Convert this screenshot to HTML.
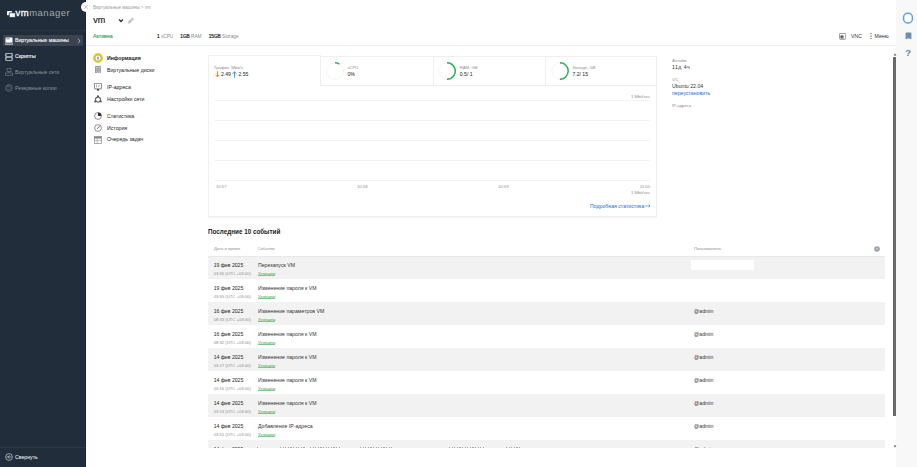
<!DOCTYPE html>
<html><head><meta charset="utf-8">
<style>
*{box-sizing:border-box;margin:0;padding:0}
html,body{width:917px;height:467px;overflow:hidden;background:#fff;font-family:"Liberation Sans",sans-serif;color:#222}
.a{position:absolute;white-space:nowrap}
#side{position:absolute;left:0;top:0;width:86px;height:467px;background:#212d3a;border-right:1px solid #1a2530}
#strip{position:absolute;left:896px;top:0;width:21px;height:467px;background:#f8f8f8}
.nav{font-size:5.2px;line-height:6px}
.g{color:#9a9a9a}
.dl{position:absolute;left:215px;width:435px;height:1px;background:repeating-linear-gradient(to right,#eeeeee 0 1px,#f8f8f8 1px 2px)}
.hs{font-size:4.8px;line-height:6px;color:#8a8a8a;letter-spacing:-0.05px}
.hs b{font-weight:normal;color:#2a2a2a;-webkit-text-stroke:0.2px #2a2a2a}
.vb{-webkit-text-stroke:0.15px #2a2a2a}
.row{position:absolute;left:208px;width:677px;height:23px}
.row.gr{background:#f2f2f2}
.d{font-size:5.1px;line-height:6px;color:#2a2a2a;-webkit-text-stroke:0.03px #2a2a2a}
.t{font-size:4.2px;line-height:4px;color:#8e8e8e}
.row .t,.row .ok{margin-top:0.5px}
.ok{font-size:4.25px;line-height:4px;color:#3a9a4a}
.ok::after{content:"";position:absolute;left:0;right:0;bottom:0px;height:0.5px;background:#7cc58b}
.ev{font-size:5.2px;line-height:6px;color:#333}
.usr{font-size:5.2px;line-height:6px;color:#333}
</style></head><body>

<div id="side">
  <!-- logo -->
  <svg class="a" style="left:6px;top:9.6px" width="11" height="8" viewBox="0 0 11 8"><rect x="1" y="1" width="5" height="4.2" rx="0.5" fill="#fff"/><rect x="3.3" y="2.8" width="6" height="4.6" rx="0.5" fill="#fff" stroke="#212d3a" stroke-width="0.8"/></svg>
  <div class="a" style="left:15.5px;top:7.1px;font-size:9.5px;line-height:12px;letter-spacing:0.5px"><span style="color:#fff;-webkit-text-stroke:0.3px #fff">vm</span><span style="color:#a3aab3">manager</span></div>
  <div class="a" style="left:0;top:30px;width:86px;height:1px;background:#293544"></div>
  <div class="a" style="left:3px;top:35px;width:80px;height:11px;background:#3a4451;border-radius:1px"></div>
  <div class="a nav" style="left:15px;top:37.1px;color:#f2f4f7;-webkit-text-stroke:0.12px #f2f4f7">Виртуальные машины</div>
  <div class="a nav" style="left:15px;top:52.6px;color:#f2f4f7;-webkit-text-stroke:0.12px #f2f4f7">Скрипты</div>
  <div class="a nav" style="left:15px;top:69px;color:#8a929c">Виртуальные сети</div>
  <div class="a nav" style="left:15px;top:85px;color:#8a929c">Резервные копии</div>
  <div class="a" style="left:0;top:447.2px;width:86px;height:1px;background:#2a3645"></div>
  <div class="a nav" style="left:15px;top:454px;color:#fff">Свернуть</div>
</div>

<div id="strip"></div>

<!-- header -->
<div class="a" style="left:93px;top:5px;font-size:4.5px;line-height:5px;color:#999">Виртуальные машины &gt; vm</div>
<div class="a" style="left:93.2px;top:14.5px;font-size:9px;line-height:11px;color:#222;-webkit-text-stroke:0.18px #222">vm</div>
<div class="a" style="left:93px;top:32.8px;font-size:5.2px;line-height:6px;color:#3a9a55;-webkit-text-stroke:0.12px #3a9a55">Активна</div>
<div class="a hs" style="left:157px;top:33.7px"><b>1</b> vCPU</div>
<div class="a hs" style="left:180.3px;top:33.7px"><b>1GB</b> RAM</div>
<div class="a hs" style="left:208.7px;top:33.7px"><b>15GB</b> Storage</div>
<div class="a" style="left:851px;top:32.9px;font-size:5.2px;line-height:6px;color:#333">VNC</div>
<div class="a" style="left:874.6px;top:32.9px;font-size:5.2px;line-height:6px;color:#333">Меню</div>
<div class="a" style="left:86px;top:45px;width:810px;height:1px;background:#ececec"></div>

<!-- left menu -->
<div class="a nav" style="left:107px;top:54.6px;font-weight:bold">Информация</div>
<div class="a nav" style="left:107px;top:66.8px">Виртуальные диски</div>
<div class="a nav" style="left:107px;top:83.8px">IP-адреса</div>
<div class="a nav" style="left:107px;top:95.7px">Настройки сети</div>
<div class="a nav" style="left:107px;top:113.1px">Статистика</div>
<div class="a nav" style="left:107px;top:125.1px">История</div>
<div class="a nav" style="left:107px;top:136.2px">Очередь задач</div>

<!-- card -->
<div class="a" style="left:208px;top:56px;width:449px;height:160.7px;border:1px solid #efefef;border-top:none;box-shadow:0 1px 1px rgba(0,0,0,0.04)"></div>
<div class="a" style="left:208px;top:55px;width:113px;height:1px;background:#efefef;border-top-left-radius:1px"></div>
<div class="a" style="left:320px;top:56px;width:337px;height:30px;border:1px solid #efefef;border-top-left-radius:0"></div>
<div class="a" style="left:320px;top:55px;width:1px;height:2px;background:#efefef"></div>
<div class="a" style="left:433px;top:56px;width:1px;height:30px;background:#efefef"></div>
<div class="a" style="left:545px;top:56px;width:1px;height:30px;background:#efefef"></div>
<!-- right info -->
<div class="a t" style="left:672px;top:58.5px">Аптайм</div>
<div class="a ev" style="left:672px;top:63.5px;letter-spacing:0.45px">11д 4ч</div>
<div class="a t" style="left:672px;top:78px">ОС</div>
<div class="a ev" style="left:672px;top:83px">Ubuntu 22.04</div>
<div class="a ev" style="left:672px;top:90px;color:#1a6fd6">переустановить</div>
<div class="a t" style="left:672px;top:103.5px">IP-адреса</div>

<!-- events -->
<div class="a" style="left:208px;top:227.6px;font-size:6.3px;line-height:8px;font-weight:bold;color:#222">Последние 10 событий</div>
<div class="a t" style="left:214px;top:247px">Дата и время</div>
<div class="a t" style="left:257.5px;top:247px">Событие</div>
<div class="a t" style="left:694px;top:247px">Пользователь</div>



<!-- ICONS -->
<!-- close button -->
<div class="a" style="left:80.8px;top:1.8px;width:10.4px;height:10.4px;border-radius:50%;background:#fff;box-shadow:0 0 1px rgba(0,0,0,0.15)"></div>
<svg class="a" style="left:83px;top:4px" width="6" height="6" viewBox="0 0 6 6"><path d="M0.8 0.9L5 5.1M5 0.9L0.8 5.1" stroke="#aaa" stroke-width="0.65"/></svg>

<!-- sidebar icons -->
<svg class="a" style="left:4.5px;top:36.5px" width="8" height="8" viewBox="0 0 8 8"><rect x="0.5" y="0.5" width="7" height="5" rx="0.6" fill="#fff"/><rect x="0.5" y="6" width="7" height="1.6" rx="0.4" fill="none" stroke="#fff" stroke-width="0.6"/><rect x="1.5" y="1.5" width="3" height="0.7" fill="#3a4451"/></svg>
<svg class="a" style="left:77px;top:37.5px" width="4" height="6" viewBox="0 0 4 6"><path d="M1 0.7L3 3L1 5.3" fill="none" stroke="#ccd" stroke-width="0.7"/></svg>
<svg class="a" style="left:5px;top:52.5px" width="8" height="8" viewBox="0 0 8 8"><rect x="0.9" y="0.6" width="6.2" height="3.2" fill="none" stroke="#dfe3e8" stroke-width="0.7"/><rect x="0.9" y="4.2" width="6.2" height="3.2" fill="none" stroke="#dfe3e8" stroke-width="0.7"/><path d="M0 2.2H1.6M6.4 2.2H8M0 5.8H1.6M6.4 5.8H8" stroke="#dfe3e8" stroke-width="0.7"/></svg>
<svg class="a" style="left:4.5px;top:68px" width="8" height="8" viewBox="0 0 8 8"><rect x="2" y="0.4" width="4" height="3" fill="none" stroke="#6d7682" stroke-width="0.7"/><path d="M4 3.4V5M0.5 5H7.5M0.5 5V7.6H7.5V5" fill="none" stroke="#6d7682" stroke-width="0.7"/></svg>
<svg class="a" style="left:4.5px;top:84px" width="8" height="8" viewBox="0 0 8 8"><circle cx="4" cy="4" r="3.4" fill="none" stroke="#6d7682" stroke-width="0.7"/><path d="M2.3 4.6A1.9 1.9 0 1 0 2.6 2.7M2.6 1.6V2.8H3.8" fill="none" stroke="#6d7682" stroke-width="0.7"/></svg>
<svg class="a" style="left:4.5px;top:453px" width="8" height="8" viewBox="0 0 8 8"><circle cx="4" cy="4" r="3.4" fill="none" stroke="#c9ced6" stroke-width="0.7"/><path d="M4.6 2.3L2.9 4L4.6 5.7M1.5 4H6.6" fill="none" stroke="#c9ced6" stroke-width="0.7"/></svg>

<!-- title chevron & pencil -->
<svg class="a" style="left:117.5px;top:17.5px" width="6" height="5" viewBox="0 0 6 5"><path d="M1 1.5L3 3.5L5 1.5" fill="none" stroke="#2d3540" stroke-width="1.25"/></svg>
<svg class="a" style="left:127px;top:16.8px" width="7.5" height="7" viewBox="0 0 7.5 7"><path d="M0.6 6.6L1 4.6L4.9 0.7Q5.4 0.2 5.9 0.7L6.8 1.6Q7.3 2.1 6.8 2.6L2.9 6.5Z" fill="#c9c9c9"/><path d="M4.3 1.5L6 3.2" stroke="#fff" stroke-width="0.35"/></svg>

<!-- VNC icon & menu dots -->
<svg class="a" style="left:839px;top:32.8px" width="7.2" height="6.8" viewBox="0 0 7.2 6.8"><rect x="0.45" y="0.45" width="6.3" height="5.9" rx="0.8" fill="#fff" stroke="#8f8f8f" stroke-width="0.9"/><path d="M1.4 5.4V3.2Q1.4 2.2 2.4 2.2H3.4Q4.6 2.2 4.6 3.4V5.4Z" fill="#666"/></svg>
<svg class="a" style="left:870.2px;top:33px" width="2" height="6.4" viewBox="0 0 2 6.4"><circle cx="1" cy="0.7" r="0.6" fill="#444"/><circle cx="1" cy="3.2" r="0.6" fill="#444"/><circle cx="1" cy="5.7" r="0.6" fill="#444"/></svg>

<!-- right strip icons -->
<svg class="a" style="left:901.5px;top:12px" width="12" height="12" viewBox="0 0 12 12"><rect x="1.6" y="1.3" width="8.8" height="9.6" rx="4" fill="#fff" stroke="#5ba0f6" stroke-width="1.5"/></svg>
<svg class="a" style="left:904.5px;top:32px" width="7" height="8" viewBox="0 0 7 8"><path d="M0.6 1.2Q0.6 0.5 1.3 0.5H5.7Q6.4 0.5 6.4 1.2V7.3L3.5 6.2L0.6 7.3Z" fill="#6d8db0"/></svg>
<div class="a" style="left:905.3px;top:48.3px;font-size:9.5px;line-height:10px;color:#5f80a8;font-weight:bold">?</div>
<!-- left menu icons -->
<svg class="a" style="left:92px;top:51.5px" width="12" height="12" viewBox="0 0 12 12"><circle cx="6" cy="6" r="4.15" fill="#fff" stroke="#f2d11c" stroke-width="1.9"/><circle cx="6" cy="6" r="3.05" fill="none" stroke="#666" stroke-width="0.5"/><rect x="5.5" y="4.6" width="1" height="3" rx="0.4" fill="#555"/></svg>
<svg class="a" style="left:94.7px;top:65.5px" width="6.5" height="7.7" viewBox="0 0 6.5 7.7"><rect x="0" y="0" width="6.5" height="7.7" rx="0.4" fill="#9a9fa6"/><rect x="1" y="1" width="1.6" height="1.4" fill="#c9ccd0"/><rect x="3.6" y="1" width="1.8" height="1.4" fill="#c9ccd0"/><rect x="1" y="3.3" width="4.4" height="1.2" fill="#b5b9be"/><path d="M1.2 5.4L2.8 6.8" stroke="#fff" stroke-width="0.7"/><rect x="3.8" y="5.3" width="1.6" height="1.5" fill="#c9ccd0"/></svg>
<svg class="a" style="left:94px;top:83px" width="8" height="8" viewBox="0 0 8 8"><path d="M0.4 0.8Q0.4 0.3 0.9 0.3H7.1Q7.6 0.3 7.6 0.8V5.4Q7.6 5.9 7.1 5.9H0.9Q0.4 5.9 0.4 5.4Z" fill="none" stroke="#6f747b" stroke-width="0.9"/><path d="M2.6 1.6V4.4M4.2 3.9L5.6 2" stroke="#777" stroke-width="0.6"/><rect x="2.9" y="6" width="2.2" height="1.7" fill="#555"/></svg>
<svg class="a" style="left:94px;top:94.8px" width="8" height="8" viewBox="0 0 8 8"><circle cx="4" cy="4.6" r="2.5" fill="none" stroke="#666" stroke-width="1.1"/><circle cx="4" cy="1.2" r="1" fill="#555"/><circle cx="1.1" cy="6.4" r="1" fill="#555"/><circle cx="6.9" cy="6.4" r="1" fill="#555"/></svg>
<svg class="a" style="left:93.8px;top:112px" width="8" height="8" viewBox="0 0 8 8"><circle cx="4" cy="4" r="3.4" fill="none" stroke="#444" stroke-width="0.6"/><path d="M4 4V0.6A3.4 3.4 0 0 1 7.4 4Z" fill="#333"/></svg>
<svg class="a" style="left:93.8px;top:124px" width="8" height="8" viewBox="0 0 8 8"><circle cx="4" cy="4" r="3.4" fill="none" stroke="#444" stroke-width="0.6"/><path d="M4 4L5.6 2.2M4 4L3 4.8" stroke="#333" stroke-width="0.7"/></svg>
<svg class="a" style="left:94px;top:135.5px" width="8" height="8" viewBox="0 0 8 8"><rect x="0.4" y="0.6" width="7.2" height="6.8" fill="#fff" stroke="#888" stroke-width="0.7"/><path d="M0.4 2.4H7.6M0.4 4.6H7.6M3.2 2.4V7.4" stroke="#999" stroke-width="0.6"/><rect x="0.4" y="0.6" width="7.2" height="1.6" fill="#888"/></svg>

<!-- traffic tab -->
<div class="a t" style="left:213.8px;top:65.9px;font-size:4.35px">Трафик, Mbit/s</div>
<svg class="a" style="left:214.6px;top:70.8px" width="5" height="6.5" viewBox="0 0 5 6.5"><path d="M2.5 0.2V5.6M0.7 3.8L2.5 5.8L4.3 3.8" fill="none" stroke="#f5821f" stroke-width="1"/></svg>
<div class="a d vb" style="left:221px;top:71px">2.49</div>
<svg class="a" style="left:231.5px;top:70.5px" width="5" height="7" viewBox="0 0 5 7"><path d="M2.5 6.7V0.7M0.6 2.8L2.5 0.7L4.4 2.8" fill="none" stroke="#2d8cf0" stroke-width="0.9"/></svg>
<div class="a d vb" style="left:238.5px;top:71px">2.55</div>

<!-- donuts -->
<svg class="a" style="left:325.9px;top:61.8px" width="18" height="18" viewBox="0 0 18 18"><circle cx="9" cy="9" r="8.3" fill="none" stroke="#efefef" stroke-width="0.7"/><path d="M9.0 0.6999999999999993A8.3 8.3 0 0 1 13.52 2.04" fill="none" stroke="#2db35d" stroke-width="1.5"/></svg>
<div class="a t" style="left:347.4px;top:65.6px">vCPU</div>
<div class="a d vb" style="left:347.4px;top:71.1px">0%</div>
<svg class="a" style="left:438px;top:61.8px" width="18" height="18" viewBox="0 0 18 18"><circle cx="9" cy="9" r="8.3" fill="none" stroke="#efefef" stroke-width="0.7"/><path d="M9.0 0.6999999999999993A8.3 8.3 0 0 1 9.00 17.30" fill="none" stroke="#2db35d" stroke-width="1.5"/></svg>
<div class="a t" style="left:459.8px;top:65.6px">RAM, GB</div>
<div class="a d vb" style="left:459.8px;top:71.1px">0.5/ 1</div>
<svg class="a" style="left:550.5px;top:61.8px" width="18" height="18" viewBox="0 0 18 18"><circle cx="9" cy="9" r="8.3" fill="none" stroke="#efefef" stroke-width="0.7"/><path d="M9.0 0.6999999999999993A8.3 8.3 0 1 1 8.86 17.30" fill="none" stroke="#2db35d" stroke-width="1.5"/></svg>
<div class="a t" style="left:572.4px;top:65.6px">Storage, GB</div>
<div class="a d vb" style="left:572.4px;top:71.1px">7.2/ 15</div>

<!-- chart -->
<div class="a t" style="right:267px;top:94.5px;text-align:right">1 Mbit/sec</div>
<div class="a dl" style="top:100px"></div>
<div class="a dl" style="top:120px"></div>
<div class="a dl" style="top:140px"></div>
<div class="a dl" style="top:160px"></div>
<div class="a dl" style="top:180px"></div>
<div class="a t" style="left:216px;top:184.6px">10:57</div>
<div class="a t" style="left:357px;top:184.6px">10:58</div>
<div class="a t" style="left:498px;top:184.6px">10:59</div>
<div class="a t" style="right:267px;top:184.6px;text-align:right">11:00</div>
<div class="a t" style="right:267px;top:191.2px;text-align:right">1 Mbit/sec</div>
<div class="a ev" style="left:590px;top:202.7px;color:#1a6fd6">Подробная статистика</div><svg class="a" style="left:645.3px;top:203.8px" width="5.5" height="4" viewBox="0 0 5.5 4"><path d="M0.2 2H5M3.6 0.9L5 2L3.6 3.1" fill="none" stroke="#1a6fd6" stroke-width="0.55"/></svg>

<!-- gear -->
<svg class="a" style="left:873.5px;top:245.5px" width="6" height="6" viewBox="0 0 6 6"><circle cx="3" cy="3" r="2.8" fill="#9aa0a7"/><circle cx="3" cy="3" r="0.8" fill="#e4e6e8"/></svg>

<!-- scrollbar -->
<svg class="a" style="left:892.5px;top:53px" width="4" height="3" viewBox="0 0 4 3"><path d="M0.6 2.6L2 0.6L3.4 2.6Z" fill="#555"/></svg>
<div class="a" style="left:893.2px;top:57.2px;width:2.4px;height:359px;background:#6a6a6a"></div>
<svg class="a" style="left:892.5px;top:444.5px" width="4" height="3" viewBox="0 0 4 3"><path d="M0.6 0.4L2 2.4L3.4 0.4Z" fill="#555"/></svg>
<!--ROWS--><div id="events" style="position:absolute;left:0;top:0;width:917px;height:448px;overflow:hidden">
<div class="row gr" style="top:256px"><div class="a d" style="left:5.7px;top:6.2px">19 фев 2025</div><div class="a t" style="left:5.7px;top:15.3px">03:55 (UTC +03:00)</div><div class="a ev" style="left:50px;top:6.2px">Перезапуск VM</div><div class="a ok" style="left:50px;top:15.3px">Успешно</div><div class="a" style="left:483px;top:4px;width:63px;height:9.5px;background:#fff"></div></div>
<div class="row" style="top:279px"><div class="a d" style="left:5.7px;top:6.2px">19 фев 2025</div><div class="a t" style="left:5.7px;top:15.3px">03:55 (UTC +03:00)</div><div class="a ev" style="left:50px;top:6.2px">Изменение пароля к VM</div><div class="a ok" style="left:50px;top:15.3px">Успешно</div></div>
<div class="row gr" style="top:302px"><div class="a d" style="left:5.7px;top:6.2px">16 фев 2025</div><div class="a t" style="left:5.7px;top:15.3px">08:33 (UTC +03:00)</div><div class="a ev" style="left:50px;top:6.2px">Изменение параметров VM</div><div class="a ok" style="left:50px;top:15.3px">Успешно</div><div class="a usr" style="left:486px;top:6.1px">@admin</div></div>
<div class="row" style="top:325px"><div class="a d" style="left:5.7px;top:6.2px">16 фев 2025</div><div class="a t" style="left:5.7px;top:15.3px">08:32 (UTC +03:00)</div><div class="a ev" style="left:50px;top:6.2px">Изменение пароля к VM</div><div class="a ok" style="left:50px;top:15.3px">Успешно</div><div class="a usr" style="left:486px;top:6.1px">@admin</div></div>
<div class="row gr" style="top:348px"><div class="a d" style="left:5.7px;top:6.2px">14 фев 2025</div><div class="a t" style="left:5.7px;top:15.3px">03:17 (UTC +03:00)</div><div class="a ev" style="left:50px;top:6.2px">Изменение пароля к VM</div><div class="a ok" style="left:50px;top:15.3px">Успешно</div><div class="a usr" style="left:486px;top:6.1px">@admin</div></div>
<div class="row" style="top:371px"><div class="a d" style="left:5.7px;top:6.2px">14 фев 2025</div><div class="a t" style="left:5.7px;top:15.3px">03:16 (UTC +03:00)</div><div class="a ev" style="left:50px;top:6.2px">Изменение пароля к VM</div><div class="a ok" style="left:50px;top:15.3px">Успешно</div><div class="a usr" style="left:486px;top:6.1px">@admin</div></div>
<div class="row gr" style="top:394px"><div class="a d" style="left:5.7px;top:6.2px">14 фев 2025</div><div class="a t" style="left:5.7px;top:15.3px">03:13 (UTC +03:00)</div><div class="a ev" style="left:50px;top:6.2px">Изменение пароля к VM</div><div class="a ok" style="left:50px;top:15.3px">Успешно</div><div class="a usr" style="left:486px;top:6.1px">@admin</div></div>
<div class="row" style="top:417px"><div class="a d" style="left:5.7px;top:6.2px">14 фев 2025</div><div class="a t" style="left:5.7px;top:15.3px">03:10 (UTC +03:00)</div><div class="a ev" style="left:50px;top:6.2px">Добавление IP-адреса</div><div class="a ok" style="left:50px;top:15.3px">Успешно</div><div class="a usr" style="left:486px;top:6.1px">@admin</div></div>
<div class="row gr" style="top:440px"><div class="a d" style="left:5.7px;top:6.1px">14 фев 2025</div><div class="a t" style="left:5.7px;top:15.3px">03:08 (UTC +03:00)</div><div class="a" style="left:49px;top:7.2px;width:3px;height:0.8px;background:repeating-linear-gradient(to right,#aaa 0 1.2px,transparent 1.2px 2.6px)"></div><div class="a" style="left:72px;top:7.2px;width:26px;height:0.8px;background:repeating-linear-gradient(to right,#aaa 0 1.2px,transparent 1.2px 2.6px)"></div><div class="a" style="left:101.5px;top:7.2px;width:30.5px;height:0.8px;background:repeating-linear-gradient(to right,#aaa 0 1.2px,transparent 1.2px 2.6px)"></div><div class="a" style="left:152px;top:7.2px;width:31.5px;height:0.8px;background:repeating-linear-gradient(to right,#aaa 0 1.2px,transparent 1.2px 2.6px)"></div><div class="a" style="left:241px;top:7.2px;width:36px;height:0.8px;background:repeating-linear-gradient(to right,#aaa 0 1.2px,transparent 1.2px 2.6px)"></div><div class="a" style="left:298px;top:7.2px;width:14px;height:0.8px;background:repeating-linear-gradient(to right,#aaa 0 1.2px,transparent 1.2px 2.6px)"></div><div class="a ok" style="left:50px;top:15.3px">Успешно</div><div class="a usr" style="left:486px;top:6.1px">@admin</div></div>
</div><!--/ROWS-->
<div class="a" style="left:208px;top:256px;width:677px;height:1px;background:#e8e8e8"></div>
</body></html>
